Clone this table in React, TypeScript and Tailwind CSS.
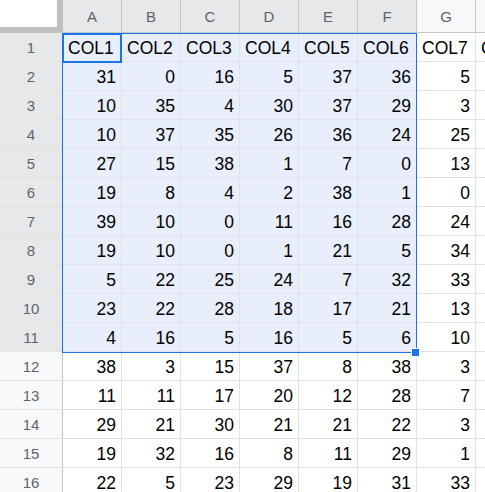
import React from "react";

const data: number[][] = [
  [31, 0, 16, 5, 37, 36, 5],
  [10, 35, 4, 30, 37, 29, 3],
  [10, 37, 35, 26, 36, 24, 25],
  [27, 15, 38, 1, 7, 0, 13],
  [19, 8, 4, 2, 38, 1, 0],
  [39, 10, 0, 11, 16, 28, 24],
  [19, 10, 0, 1, 21, 5, 34],
  [5, 22, 25, 24, 7, 32, 33],
  [23, 22, 28, 18, 17, 21, 13],
  [4, 16, 5, 16, 5, 6, 10],
  [38, 3, 15, 37, 8, 38, 3],
  [11, 11, 17, 20, 12, 28, 7],
  [29, 21, 30, 21, 21, 22, 3],
  [19, 32, 16, 8, 11, 29, 1],
  [22, 5, 23, 29, 19, 31, 33],
];

const cols = ["A", "B", "C", "D", "E", "F", "G", "H"];

function Cell({
  children,
  selected,
  align,
}: {
  children?: React.ReactNode;
  selected: boolean;
  align: "left" | "right";
}) {
  return (
    <div
      className={
        "w-[59px] shrink-0 h-full border-r border-[#e2e2e2] flex items-center pt-[2px] overflow-visible whitespace-nowrap " +
        (selected ? "bg-[#e8eefb] " : "bg-white ") +
        (align === "right" ? "justify-end pr-[5px]" : "justify-start pl-[5px]")
      }
    >
      {children}
    </div>
  );
}

export default function App() {
  return (
    <div
      className="relative w-[485px] h-[492px] overflow-hidden bg-white"
      style={{ fontFamily: '"Liberation Sans", Arial, sans-serif' }}
    >
      {/* header row */}
      <div className="flex h-[33px] w-[600px]">
        <div className="w-[63px] h-[33px] shrink-0 bg-[#c0c0c0]">
          <div className="w-[57px] h-[27px] bg-white" />
        </div>
        {cols.map((c, i) => (
          <div
            key={c}
            className={
              "w-[59px] shrink-0 h-full border-r border-b border-[#c4c7c5] flex items-center justify-center pt-[3px] text-[15px] text-[#5f6368] " +
              (i < 6 ? "bg-[#e6e8ea]" : "bg-[#f8f9fa]")
            }
          >
            {c}
          </div>
        ))}
      </div>

      {/* rows */}
      {Array.from({ length: 16 }).map((_, r) => {
        const rowSel = r < 11;
        return (
          <div key={r} className="flex h-[29px] w-[600px] border-b border-[#e2e2e2]">
            <div
              className={
                "w-[63px] shrink-0 h-full border-r border-[#c4c7c5] flex items-center justify-center pt-[2px] text-[15px] text-[#5f6368] " +
                (rowSel ? "bg-[#e6e8ea]" : "bg-[#f8f9fa]")
              }
            >
              {r + 1}
            </div>
            {cols.map((c, ci) => {
              const sel = rowSel && ci < 6;
              if (r === 0) {
                return (
                  <Cell key={c} selected={sel} align="left">
                    <span className="text-[17.5px] text-black">COL{ci + 1}</span>
                  </Cell>
                );
              }
              const v = ci < 7 ? data[r - 1][ci] : undefined;
              return (
                <Cell key={c} selected={sel} align="right">
                  {v !== undefined && <span className="text-[17.5px] text-black">{v}</span>}
                </Cell>
              );
            })}
          </div>
        );
      })}

      {/* selection outline */}
      <div className="absolute left-[62px] top-[33px] w-[355px] h-[320px] border border-[#1a73e8] pointer-events-none" />
      {/* active cell */}
      <div className="absolute left-[62px] top-[33px] w-[60px] h-[30px] border-2 border-[#1a73e8] pointer-events-none" />
      {/* fill handle */}
      <div className="absolute left-[411px] top-[348px] w-[9px] h-[9px] bg-[#1a73e8] border border-white pointer-events-none" />
    </div>
  );
}
